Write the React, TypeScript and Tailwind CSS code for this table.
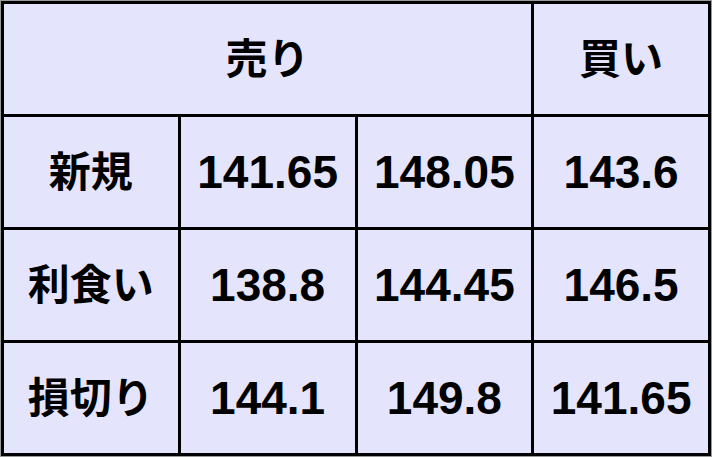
import React from 'react';

const rows = [
  { label: '新規', values: ['141.65', '148.05', '143.6'] },
  { label: '利食い', values: ['138.8', '144.45', '146.5'] },
  { label: '損切り', values: ['144.1', '149.8', '141.65'] },
];

const jp = "font-['Liberation_Sans','Noto_Sans_CJK_JP',sans-serif]";

export default function App() {
  return (
    <div className="w-[712px] h-[457px] bg-[#9a9a9a] p-px">
      <div
        className={`grid grid-cols-4 grid-rows-4 gap-[3px] w-full h-full bg-black border-[3px] border-black text-black font-bold ${jp}`}
      >
        {/* Header */}
        <div className="col-span-3 bg-[#e4e4fc] flex items-center justify-center text-[42px]">売り</div>
        <div className="bg-[#e4e4fc] flex items-center justify-center text-[42px]">買い</div>

        {rows.map((r) => (
          <React.Fragment key={r.label}>
            <div className="bg-[#e4e4fc] flex items-center justify-center text-[42px]">{r.label}</div>
            {r.values.map((v, i) => (
              <div key={i} className="bg-[#e4e4fc] flex items-center justify-center text-[46px]">
                {v}
              </div>
            ))}
          </React.Fragment>
        ))}
      </div>
    </div>
  );
}
